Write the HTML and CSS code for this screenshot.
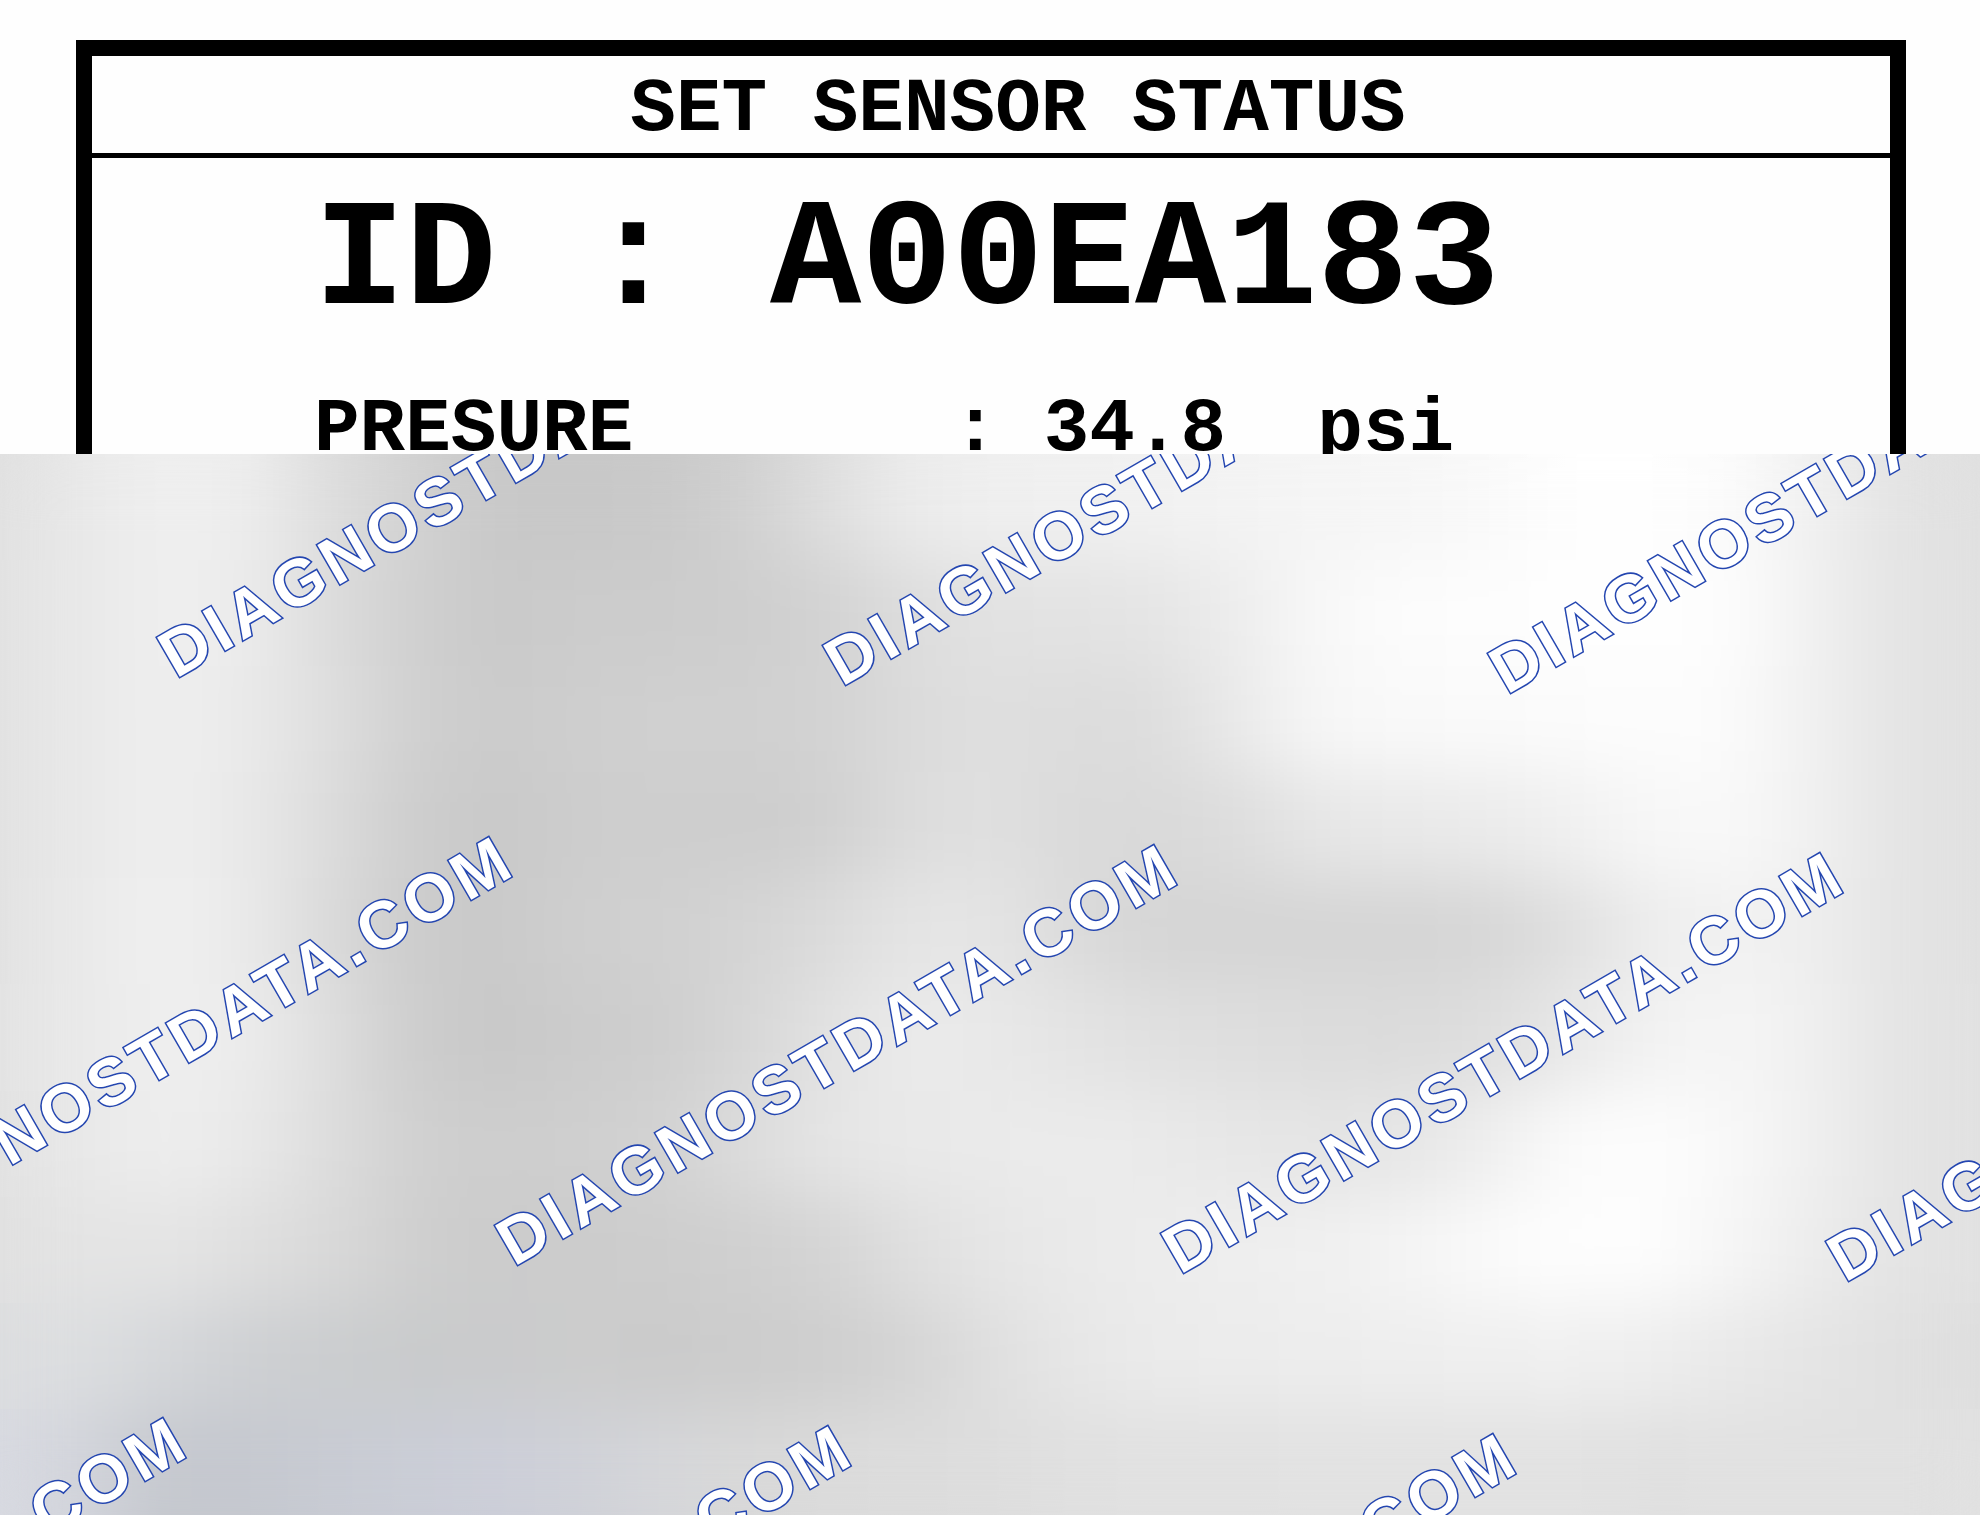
FILE: index.html
```html
<!DOCTYPE html>
<html lang="en">
<head>
  <meta charset="UTF-8">
  <meta name="viewport" content="width=device-width, initial-scale=1.0">
  <title>Set Sensor Status</title>
  <link rel="stylesheet" href="styles.css">
</head>
<body>
  <div class="screen">
    <div class="frame">
      <h1 class="title">SET SENSOR STATUS</h1>
      <div class="readings">
        <p class="sensor-id">ID : A00EA183</p>
        <p class="reading">PRESURE       : 34.8  psi</p>
      </div>
    </div>
  </div>

  <div class="preview">
    <div class="band band-1"></div>
    <div class="band band-2"></div>
    <div class="band band-3"></div>
    <div class="band band-4"></div>
    <div class="band band-5"></div>
    <div class="band band-6"></div>
    <div class="band band-7"></div>
    <div class="band band-8"></div>
    <div class="band band-9"></div>
    <div class="band band-10"></div>
    <div class="frost"></div>
    <svg class="watermark">
      <text transform="translate(176 225) rotate(-30)">DIAGNOSTDATA.COM</text>
      <text transform="translate(842 233) rotate(-30)">DIAGNOSTDATA.COM</text>
      <text transform="translate(1507 241) rotate(-30)">DIAGNOSTDATA.COM</text>
      <text transform="translate(-151 805) rotate(-30)">DIAGNOSTDATA.COM</text>
      <text transform="translate(514 813) rotate(-30)">DIAGNOSTDATA.COM</text>
      <text transform="translate(1180 821) rotate(-30)">DIAGNOSTDATA.COM</text>
      <text transform="translate(1845 829) rotate(-30)">DIAGNOSTDATA.COM</text>
      <text transform="translate(-477 1386) rotate(-30)">DIAGNOSTDATA.COM</text>
      <text transform="translate(188 1394) rotate(-30)">DIAGNOSTDATA.COM</text>
      <text transform="translate(853 1402) rotate(-30)">DIAGNOSTDATA.COM</text>
    </svg>
  </div>
</body>
</html>
```

FILE: styles.css
```css
* {
  box-sizing: border-box;
}
body {
  display: flex;
  flex-direction: column;
  min-height: 100vh;
  margin: 0;
  background-color: #fefefe;
  color: #000;
}

/* device screen */
.screen {
  height: 454px;
  padding: 40px 74px 0 76px;
  overflow: hidden;
  font-family: "Liberation Mono", "Courier New", monospace;
  font-weight: bold;
}
.frame {
  border: 16px solid #000;
  border-bottom: 0;
}
.title {
  margin: 0;
  padding: 12px 0 0 54px;
  border-bottom: 5px solid #000;
  font-size: 76px;
  line-height: 85px;
  text-align: center;
}
.readings {
  padding: 10px 0 0 222px;
}
.sensor-id {
  margin: 0;
  font-size: 152px;
  line-height: 190px;
  white-space: pre;
}
.reading {
  margin: 24px 0 0;
  font-size: 76px;
  line-height: 96px;
  white-space: pre;
}

/* blurred preview */
.preview {
  position: relative;
  display: flex;
  flex: 1;
  flex-direction: column;
  overflow: hidden;
}
.band {
  flex: 1;
}
.band-1 {
  background: linear-gradient(to right, #e0e0e0, #e9e9e9, #efefef, #ededed, #dddddd, #d2d2d2, #c8c8c8, #c8c8c8, #c9c9c9, #d0d0d0, #dedede, #ebebeb, #efefef, #f0f0f0, #f1f1f1, #f3f3f3, #f5f5f5, #f6f6f6, #f9f9f9, #fefefe, #fefefe, #fbfbfb, #f0f0f0, #e3e3e3, #e0e0e0);
}
.band-2 {
  background: linear-gradient(to right, #e1e1e1, #e9e9e9, #efefef, #ececec, #dcdcdc, #d0d0d0, #c9c9c9, #cccccc, #cccccc, #cecece, #d2d2d2, #dddddd, #e2e2e2, #e3e3e3, #e5e5e5, #ededed, #f8f8f8, #fcfcfc, #fdfdfd, #fefefe, #fefefe, #fdfdfd, #f0f0f0, #e4e4e4, #e0e0e0);
}
.band-3 {
  background: linear-gradient(to right, #e1e1e1, #e9e9e9, #efefef, #eaeaea, #dedede, #d0d0d0, #cbcbcb, #cecece, #d0d0d0, #d0d0d0, #d2d2d2, #dbdbdb, #dfdfdf, #dcdcdc, #dddddd, #eaeaea, #f7f7f7, #f9f9f9, #fafafa, #fbfbfb, #fdfdfd, #fbfbfb, #f0f0f0, #e4e4e4, #e0e0e0);
}
.band-4 {
  background: linear-gradient(to right, #e1e1e1, #e9e9e9, #efefef, #e9e9e9, #dcdcdc, #cdcdcd, #c9c9c9, #cdcdcd, #cfcfcf, #cdcdcd, #d0d0d0, #dcdcdc, #e0e0e0, #dadada, #d9d9d9, #dddddd, #e7e7e7, #e9e9e9, #ebebeb, #f0f0f0, #f7f7f7, #f9f9f9, #f0f0f0, #e4e4e4, #e0e0e0);
}
.band-5 {
  background: linear-gradient(to right, #e1e1e1, #eaeaea, #f0f0f0, #eaeaea, #dadada, #cccccc, #c9c9c9, #cfcfcf, #d0d0d0, #d4d4d4, #dbdbdb, #e5e5e5, #e5e5e5, #dbdbdb, #d5d5d5, #d5d5d5, #d5d5d5, #d5d5d5, #d6d6d6, #dfdfdf, #ededed, #f2f2f2, #eeeeee, #e4e4e4, #e0e0e0);
}
.band-6 {
  background: linear-gradient(to right, #e2e2e2, #eaeaea, #efefef, #ececec, #dedede, #cdcdcd, #c8c8c8, #cccccc, #cecece, #d6d6d6, #e2e2e2, #ebebeb, #e9e9e9, #e4e4e4, #e0e0e0, #dedede, #dcdcdc, #dbdbdb, #dedede, #e8e8e8, #f2f2f2, #f6f6f6, #efefef, #e4e4e4, #e1e1e1);
}
.band-7 {
  background: linear-gradient(to right, #e1e1e1, #e9e9e9, #eeeeee, #e9e9e9, #dddddd, #d0d0d0, #cdcdcd, #cfcfcf, #d2d2d2, #dcdcdc, #e5e5e5, #e9e9e9, #eaeaea, #ececec, #eaeaea, #e7e7e7, #e5e5e5, #e6e6e6, #eeeeee, #fbfbfb, #fdfdfd, #f8f8f8, #efefef, #e4e4e4, #e1e1e1);
}
.band-8 {
  background: linear-gradient(to right, #e0e0e0, #e4e4e4, #e5e5e5, #dfdfdf, #d9d9d9, #cfcfcf, #cbcbcb, #cccccc, #cdcdcd, #d0d0d0, #d4d4d4, #dfdfdf, #e6e6e6, #eaeaea, #ececec, #eeeeee, #f0f0f0, #f4f4f4, #fafafa, #fefefe, #fdfdfd, #f6f6f6, #ececec, #e4e4e4, #e1e1e1);
}
.band-9 {
  background: linear-gradient(to right, #dcdddf, #dcdee0, #d5d7da, #ced0d3, #cbcdcf, #c9cbcc, #cacbcc, #cccccc, #cbcbcb, #cccccc, #cecece, #d4d4d4, #dfdfdf, #e7e7e7, #ebebeb, #ececec, #ededed, #eeeeee, #efefef, #f0f0f0, #eeeeee, #e9e9e9, #e5e5e5, #e0e0e0, #dedede);
}
.band-10 {
  background: linear-gradient(to right, #d8dae1, #d2d4db, #c5c8ce, #c5c8cf, #c8cbd3, #cacdd6, #ccced8, #cfd1d8, #d5d6d9, #d8d8d8, #dbdbdb, #dcdcdc, #dddddd, #e0e0e0, #e1e1e1, #e1e1e1, #e2e2e2, #e2e2e2, #e2e2e2, #e2e2e2, #e0e0e0, #e1e1e1, #e1e1e1, #e1e1e1, #e1e1e1);
}
.frost {
  position: absolute;
  inset: 0;
  backdrop-filter: blur(32px);
}
.watermark {
  position: absolute;
  inset: 0;
  width: 100%;
  height: 100%;
}
.watermark text {
  fill: #fff;
  stroke: #2446b0;
  stroke-width: 3px;
  paint-order: stroke;
  font-family: "Liberation Sans", Arial, sans-serif;
  font-size: 66px;
  font-weight: bold;
  letter-spacing: 5px;
}
```
